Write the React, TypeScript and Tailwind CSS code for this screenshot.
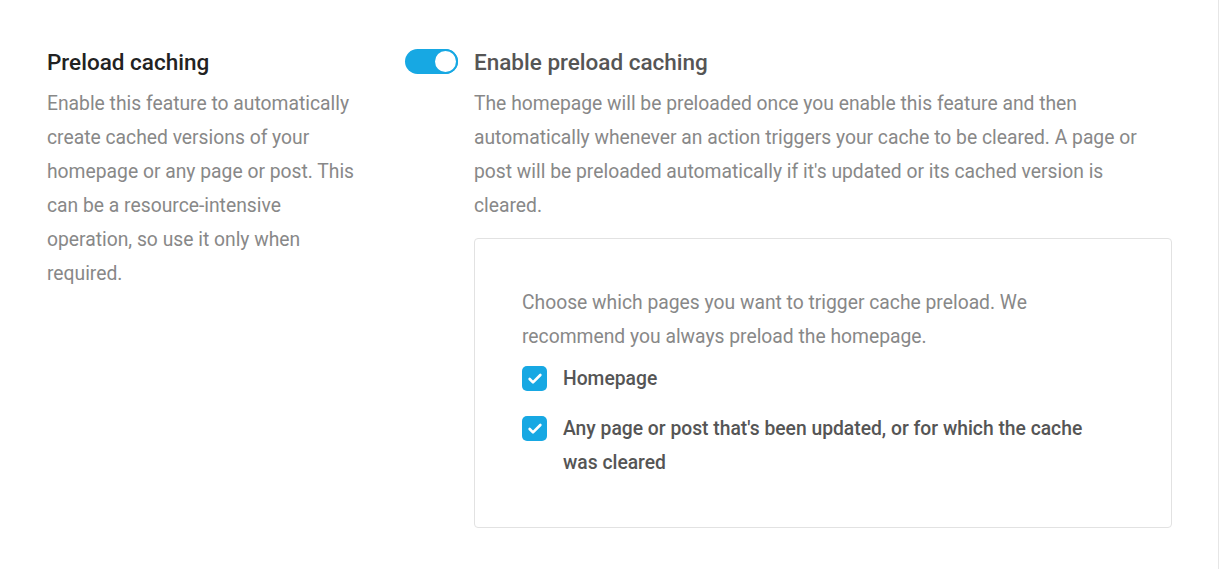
import { Check } from 'lucide-react';

const CheckItem = ({ label }: { label: string }) => (
  <label className="flex items-start gap-4">
    <span className="mt-[4px] flex h-[25px] w-[25px] shrink-0 items-center justify-center rounded-[5px] bg-[#17a8e3]">
      <Check size={16} strokeWidth={4} className="text-white" />
    </span>
    <span className="font-medium text-[#555555]">{label}</span>
  </label>
);

export default function App() {
  return (
    <div className="min-h-[569px] w-[1220px] bg-white font-['Roboto',sans-serif] text-[19.3px] leading-[34px]">
      <div className="flex min-h-[569px] w-[1219px] border-r border-[#e6e6e6] pt-[47px] pl-[47px]">
        <div className="w-[316px] shrink-0">
          <h2 className="text-[22.5px] leading-[30px] font-medium text-[#222222]">Preload caching</h2>
          <p className="mt-[10px] text-[#888888]">
            Enable this feature to automatically create cached versions of your homepage or any page or
            post. This can be a resource-intensive operation, so use it only when required.
          </p>
        </div>
        <div className="ml-[42px] flex w-[767px] gap-4">
          <span className="mt-[2px] flex h-[25px] w-[53px] shrink-0 items-center justify-end rounded-full bg-[#17a8e3]">
            <span className="h-[25px] w-[25px] rounded-full border-2 border-[#17a8e3] bg-white" />
          </span>
          <div className="w-[698px]">
            <h3 className="text-[22.5px] leading-[30px] font-medium text-[#555555]">Enable preload caching</h3>
            <p className="mt-[10px] text-[#888888]">
              The homepage will be preloaded once you enable this feature and then automatically whenever
              an action triggers your cache to be cleared. A page or post will be preloaded automatically
              if it's updated or its cached version is cleared.
            </p>
            <div className="mt-[15px] rounded-[4px] border border-[#e2e2e2] bg-white py-[47px] pr-[60px] pl-[47px]">
              <p className="text-[#888888]">
                Choose which pages you want to trigger cache preload. We recommend you always preload the
                homepage.
              </p>
              <div className="mt-[8px] flex flex-col gap-4">
                <CheckItem label="Homepage" />
                <CheckItem label="Any page or post that's been updated, or for which the cache was cleared" />
              </div>
            </div>
          </div>
        </div>
      </div>
    </div>
  );
}
